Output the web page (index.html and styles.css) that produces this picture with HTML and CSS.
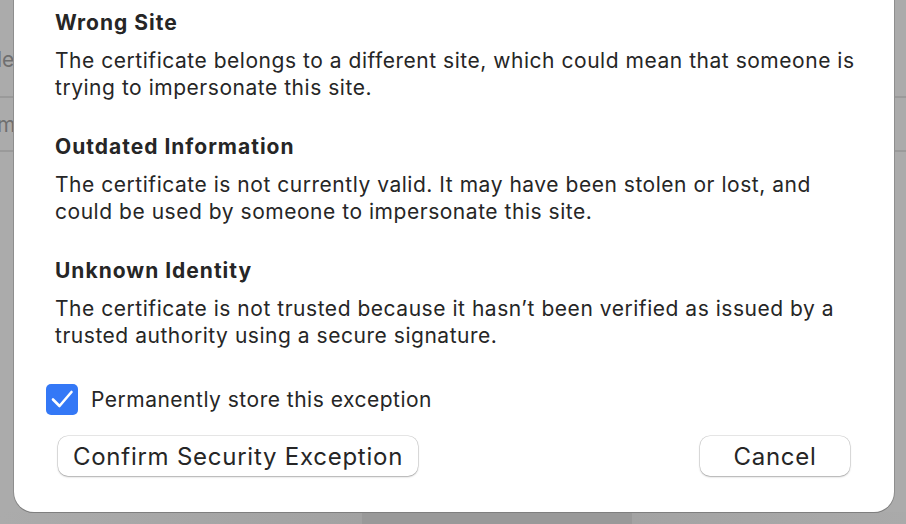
FILE: index.html
```html
<!DOCTYPE html>
<html lang="en">
<head>
<meta charset="utf-8">
<title>Security Exception</title>
<link rel="stylesheet" href="styles.css">
</head>
<body>
<div class="backdrop">
  <div class="bg-row bg-row-1"><span class="bg-text">le</span></div>
  <div class="bg-row bg-row-2"><span class="bg-text">m</span></div>
  <div class="bg-fill"></div>
  <div class="bg-bottom">
    <div class="seg seg-a"></div>
    <div class="seg seg-b"></div>
    <div class="seg seg-c"></div>
  </div>
</div>

<div class="dialog">
  <section class="reason">
    <h2 class="reason-title">Wrong Site</h2>
    <p class="reason-text">The certificate belongs to a different site, which could mean that someone is<br>trying to impersonate this site.</p>
  </section>
  <section class="reason">
    <h2 class="reason-title">Outdated Information</h2>
    <p class="reason-text">The certificate is not currently valid. It may have been stolen or lost, and<br>could be used by someone to impersonate this site.</p>
  </section>
  <section class="reason">
    <h2 class="reason-title">Unknown Identity</h2>
    <p class="reason-text">The certificate is not trusted because it hasn’t been verified as issued by a<br>trusted authority using a secure signature.</p>
  </section>

  <label class="check-row">
    <span class="checkbox">
      <svg viewBox="0 0 32 32" width="32" height="32" aria-hidden="true"><path d="M7 16.5 L13.5 23 L25.5 9" fill="none" stroke="#fff" stroke-width="2.6" stroke-linecap="round" stroke-linejoin="round"/></svg>
    </span>
    <span class="check-label">Permanently store this exception</span>
  </label>

  <div class="buttons">
    <button class="btn btn-confirm">Confirm Security Exception</button>
    <button class="btn btn-cancel">Cancel</button>
  </div>
</div>
</body>
</html>
```

FILE: styles.css
```css
* { box-sizing: border-box; }

html, body {
  margin: 0;
  padding: 0;
  width: 906px;
  height: 524px;
  overflow: hidden;
}

body {
  background: #a9a9a9;
  font-family: Inter, "Noto Sans", "Liberation Sans", sans-serif;
  position: relative;
}

.backdrop {
  display: flex;
  flex-direction: column;
  height: 524px;
}

.bg-row {
  display: flex;
  align-items: center;
  border-bottom: 2px solid #9a9a9a;
  background: #ababab;
}

.bg-row-1 { height: 98px; padding-top: 22px; }
.bg-row-2 { height: 54px; }

.bg-text {
  font-size: 21px;
  color: #6f6f6f;
  margin-left: -3px;
}

.bg-fill {
  flex: 1;
  background: #ababab;
}

.bg-bottom {
  display: flex;
  height: 12px;
}

.seg-a { width: 362px; background: linear-gradient(90deg, #ababab, #a2a2a2); }
.seg-b { width: 270px; background: #999999; }
.seg-c { flex: 1; background: linear-gradient(90deg, #a3a3a3, #aaaaaa); }

.dialog {
  position: absolute;
  left: 14px;
  top: -40px;
  width: 880px;
  height: 552px;
  background: #ffffff;
  border-radius: 20px;
  box-shadow: 0 1px 0 #7f7f7f, 0 0 0 1px #8e8e8e;
  padding: 48px 30px 0 41px;
  color: #262626;
}

.reason {
  height: 124px;
}

.reason-title {
  margin: 0;
  font-size: 21px;
  font-weight: 700;
  line-height: 30px;
  letter-spacing: 1px;
}

.reason-text {
  margin: 9px 0 0;
  font-size: 21px;
  font-weight: 400;
  line-height: 27px;
  letter-spacing: 0.53px;
  white-space: nowrap;
}

.check-row {
  display: flex;
  align-items: center;
  gap: 13px;
  margin-left: -9px;
  margin-top: 3px;
  height: 32px;
}

.checkbox {
  width: 32px;
  height: 31px;
  border-radius: 5px;
  background: #3478f6;
  display: flex;
  align-items: center;
  justify-content: center;
}

.check-label {
  font-size: 21px;
  letter-spacing: 0.5px;
  color: #262626;
}

.buttons {
  display: flex;
  justify-content: space-between;
  margin-top: 21px;
  padding: 0 14px 0 3px;
}

.btn {
  font-family: inherit;
  font-size: 24px;
  letter-spacing: 0.75px;
  color: #262626;
  background: #ffffff;
  border: none;
  border-radius: 10px;
  height: 40px;
  box-shadow: 0 0 0 0.5px rgba(0,0,0,0.18), 0 1px 2px rgba(0,0,0,0.25);
  padding: 0;
}

.btn-confirm { width: 360px; }
.btn-cancel { width: 150px; }
```
